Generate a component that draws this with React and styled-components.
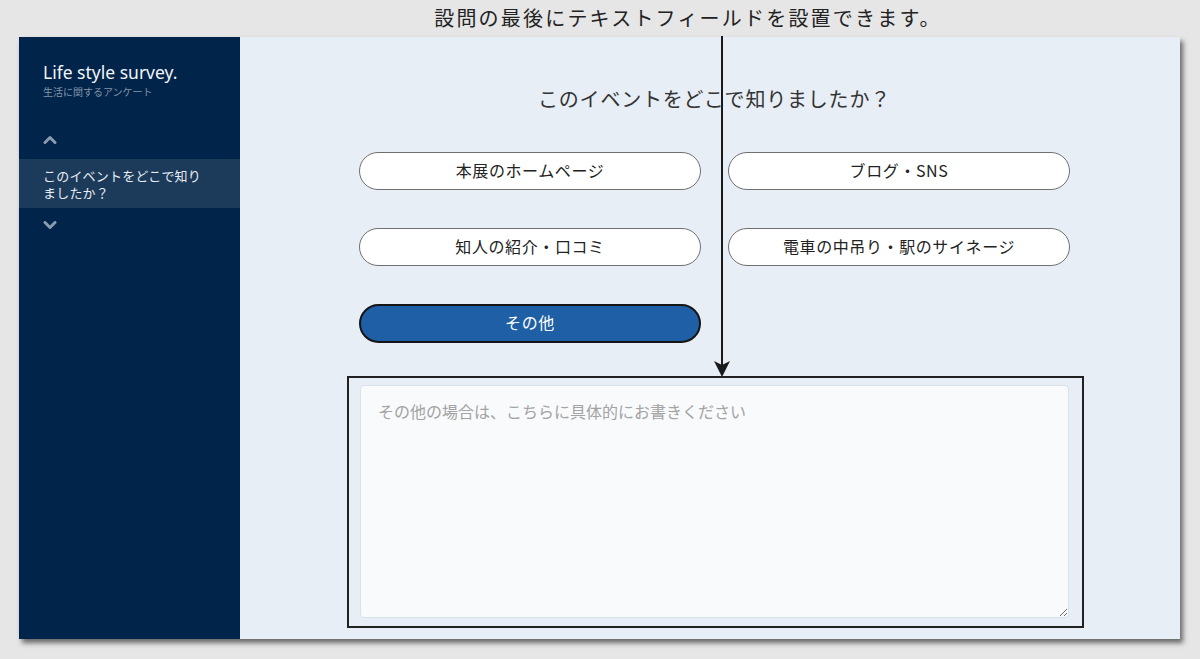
import React, { useState } from "react";
import styled, { createGlobalStyle } from "styled-components";

const GlobalStyle = createGlobalStyle`
  html, body {
    margin: 0;
    padding: 0;
    background: #e6e6e6;
    font-family: "Noto Sans", "Noto Sans CJK JP", sans-serif;
  }
  * { box-sizing: border-box; }
`;

const options = [
  "本展のホームページ",
  "ブログ・SNS",
  "知人の紹介・口コミ",
  "電車の中吊り・駅のサイネージ",
  "その他",
];

const App = () => {
  const [selected, setSelected] = useState("その他");

  return (
    <Stage>
      <GlobalStyle />
      <Note>設問の最後にテキストフィールドを設置できます。</Note>
      <Window>
        <Sidebar>
          <Brand>
            <h1>Life style survey.</h1>
            <p>生活に関するアンケート</p>
          </Brand>
          <Chevron dir="up" />
          <NavItem>このイベントをどこで知りましたか？</NavItem>
          <Chevron dir="down" />
        </Sidebar>
        <Main>
          <Column>
            <Question>このイベントをどこで知りましたか？</Question>
            <Choices>
              {options.map((o) => (
                <Choice key={o} $active={selected === o} onClick={() => setSelected(o)}>
                  {o}
                </Choice>
              ))}
            </Choices>
            <Frame>
              <Field placeholder="その他の場合は、こちらに具体的にお書きください" />
            </Frame>
          </Column>
        </Main>
      </Window>
      <Arrow width="18" height="342" viewBox="0 0 18 342">
        <line x1="9" y1="0" x2="9" y2="330" stroke="#1a1a1a" strokeWidth="2" />
        <path d="M1 325 L9 341 L17 325 L9 329 Z" fill="#1a1a1a" />
      </Arrow>
    </Stage>
  );
};

const Chevron = ({ dir }) => (
  <ChevronWrap>
    <svg width="14" height="9" viewBox="0 0 14 9">
      <polyline
        points={dir === "up" ? "2,7.5 7,2.5 12,7.5" : "2,1.5 7,6.5 12,1.5"}
        fill="none"
        stroke="#8b9bb0"
        strokeWidth="3"
        strokeLinecap="round"
        strokeLinejoin="round"
      />
    </svg>
  </ChevronWrap>
);

const Stage = styled.div`
  position: relative;
  width: 1200px;
  height: 659px;
  overflow: hidden;
`;

const Note = styled.div`
  height: 37px;
  display: flex;
  align-items: center;
  justify-content: center;
  padding: 0 0 2px 176px;
  font-family: "Noto Sans CJK JP", sans-serif;
  font-size: 20px;
  letter-spacing: 2.2px;
  color: #222;
`;

const Window = styled.div`
  margin-left: 19px;
  width: 1161px;
  height: 602px;
  display: flex;
  background: #e8eef5;
  box-shadow: 3px 4px 5px rgba(0, 0, 0, 0.55);
`;

const Sidebar = styled.aside`
  width: 221px;
  flex-shrink: 0;
  background: #00244a;
  padding-top: 24px;
  display: flex;
  flex-direction: column;
`;

const Brand = styled.div`
  padding: 0 24px;
  margin-bottom: 33px;
  h1 {
    margin: 0;
    font-family: "Noto Sans", sans-serif;
    font-weight: 400;
    font-size: 17.5px;
    line-height: 23px;
    color: #f2f5f9;
  }
  p {
    margin: 1px 0 0;
    font-family: "Noto Sans CJK JP", sans-serif;
    font-size: 10px;
    line-height: 13px;
    color: #8393a8;
  }
`;

const ChevronWrap = styled.div`
  padding: 4px 24px;
  height: 17px;
  display: flex;
  align-items: center;
`;

const NavItem = styled.div`
  margin: 11px 0 9px;
  padding: 8px 34px 7px 24px;
  background: #1c3a5a;
  font-family: "Noto Sans CJK JP", sans-serif;
  font-size: 13px;
  line-height: 17px;
  letter-spacing: 0.2px;
  color: #e8edf3;
`;

const Main = styled.main`
  flex: 1;
  padding: 48px 0 0 119px;
`;

const Column = styled.div`
  width: 711px;
  display: flex;
  flex-direction: column;
`;

const Question = styled.h2`
  margin: 0 0 39px;
  text-align: center;
  font-family: "Noto Sans CJK JP", sans-serif;
  font-weight: 400;
  font-size: 20px;
  line-height: 28px;
  letter-spacing: 0.8px;
  color: #333;
`;

const Choices = styled.div`
  display: grid;
  grid-template-columns: 342px 342px;
  column-gap: 27px;
  row-gap: 38px;
  margin-bottom: 33px;
`;

const Choice = styled.button`
  height: ${(p) => (p.$active ? "39px" : "38px")};
  border-radius: 20px;
  border: ${(p) => (p.$active ? "2px solid #151515" : "1.5px solid #707070")};
  background: ${(p) => (p.$active ? "#1f5fa5" : "#fff")};
  color: ${(p) => (p.$active ? "#fff" : "#222")};
  font-family: "Noto Sans CJK JP", sans-serif;
  font-size: 16px;
  letter-spacing: 0.6px;
  cursor: pointer;
  padding: 0 0 3px;
`;

const Frame = styled.div`
  margin-left: -12px;
  width: 737px;
  height: 252px;
  border: 2px solid #222;
  padding: 7px 13px 8px 11px;
`;

const Field = styled.textarea`
  width: 100%;
  height: 100%;
  display: block;
  border: 1px solid #dbe1e8;
  border-radius: 4px;
  background: #f8fafc;
  padding: 13px 17px;
  font-family: "Noto Sans CJK JP", sans-serif;
  font-size: 16px;
  line-height: 24px;
  color: #333;
  outline: none;
  &::placeholder {
    color: #a3a3a3;
  }
`;

const Arrow = styled.svg`
  position: absolute;
  left: 713px;
  top: 36px;
  pointer-events: none;
`;

export default App;
